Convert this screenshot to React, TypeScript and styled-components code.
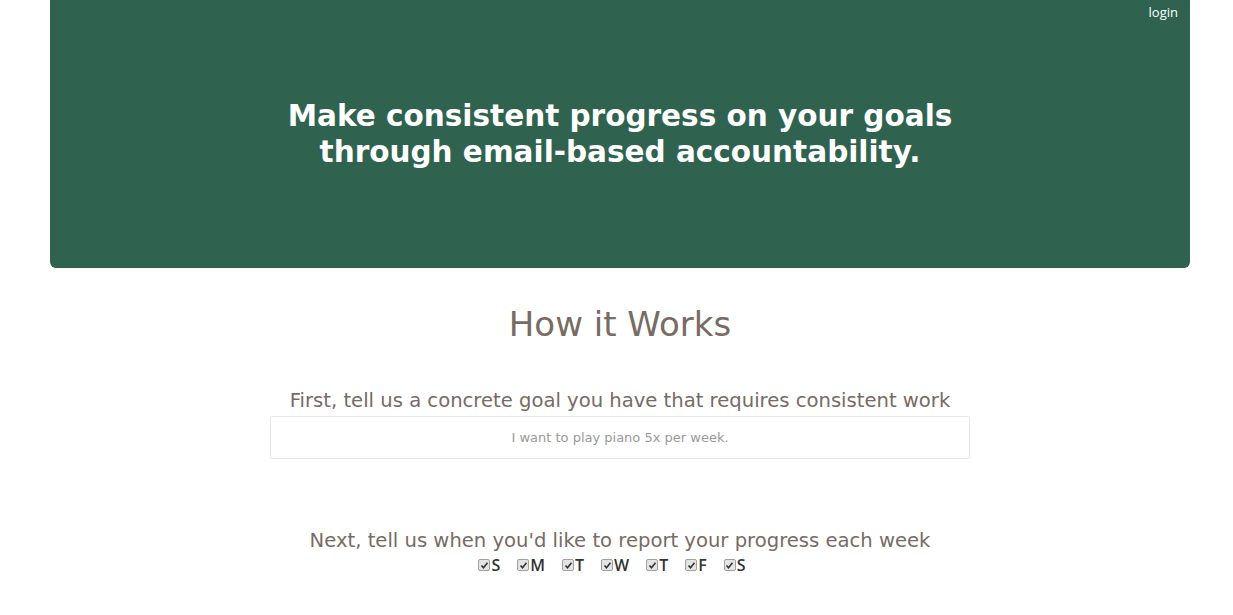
import React from "react";
import styled, { createGlobalStyle } from "styled-components";

const Global = createGlobalStyle`
  html, body { margin: 0; padding: 0; background: #fff; }
  body { font-family: "Open Sans", "Liberation Sans", sans-serif; }
  * { box-sizing: border-box; }
`;

const Page = styled.div`
  width: 1240px;
  display: flex;
  flex-direction: column;
  align-items: center;
`;

const Hero = styled.header`
  position: relative;
  width: 1140px;
  height: 268px;
  background: #2f6350;
  border-radius: 0 0 6px 6px;
  display: flex;
  align-items: center;
  justify-content: center;
`;

const Login = styled.a`
  position: absolute;
  top: 3px;
  right: 12px;
  color: #fff;
  font-family: "Open Sans", sans-serif;
  font-size: 13px;
  text-decoration: none;
`;

const HeroTitle = styled.h1`
  margin: 0;
  color: #fff;
  font-family: "DejaVu Sans", sans-serif;
  font-weight: 700;
  font-size: 29.5px;
  line-height: 36px;
  text-align: center;
`;

const Section = styled.section`
  display: flex;
  flex-direction: column;
  align-items: center;
  color: #776b64;
  font-family: "DejaVu Sans", sans-serif;
`;

const SectionTitle = styled.h2`
  margin: 36px 0 0;
  font-size: 34px;
  font-weight: 400;
  line-height: 40px;
`;

const Prompt = styled.p<{ $top: number }>`
  margin: ${(p) => p.$top}px 0 0;
  font-size: 19.6px;
  line-height: 26px;
`;

const GoalInput = styled.input`
  width: 700px;
  height: 43px;
  margin-top: 2px;
  border: 1px solid #e8e8e8;
  border-radius: 2px;
  text-align: center;
  font-family: "DejaVu Sans", sans-serif;
  font-size: 13px;
  color: #555;
  outline: none;
  &::placeholder { color: #999; }
`;

const Days = styled.div`
  display: flex;
  gap: 17px;
  margin-top: 1px;
  padding-right: 16px;
`;

const Day = styled.label`
  display: flex;
  align-items: center;
  font-family: "Open Sans", sans-serif;
  font-weight: 600;
  font-size: 16px;
  color: #333;
  line-height: 20px;
`;

const Box = styled.span`
  width: 12px;
  height: 12px;
  margin-right: 1px;
  border: 1px solid #a0a0a0;
  border-radius: 2px;
  background: #e4e4e4;
  display: inline-flex;
  align-items: center;
  justify-content: center;
`;

const days = ["S", "M", "T", "W", "T", "F", "S"];

export default function App() {
  return (
    <Page>
      <Global />
      <Hero>
        <Login href="#">login</Login>
        <HeroTitle>
          Make consistent progress on your goals
          <br />
          through email-based accountability.
        </HeroTitle>
      </Hero>
      <Section>
        <SectionTitle>How it Works</SectionTitle>
        <Prompt $top={44}>First, tell us a concrete goal you have that requires consistent work</Prompt>
        <GoalInput placeholder="I want to play piano 5x per week." />
        <Prompt $top={69}>Next, tell us when you'd like to report your progress each week</Prompt>
        <Days>
          {days.map((d, i) => (
            <Day key={i}>
              <Box>
                <svg width="9" height="9" viewBox="0 0 9 9">
                  <path d="M1.5 4.5 L3.5 6.8 L7.5 1.8" fill="none" stroke="#333" strokeWidth="1.6" />
                </svg>
              </Box>
              {d}
            </Day>
          ))}
        </Days>
      </Section>
    </Page>
  );
}
